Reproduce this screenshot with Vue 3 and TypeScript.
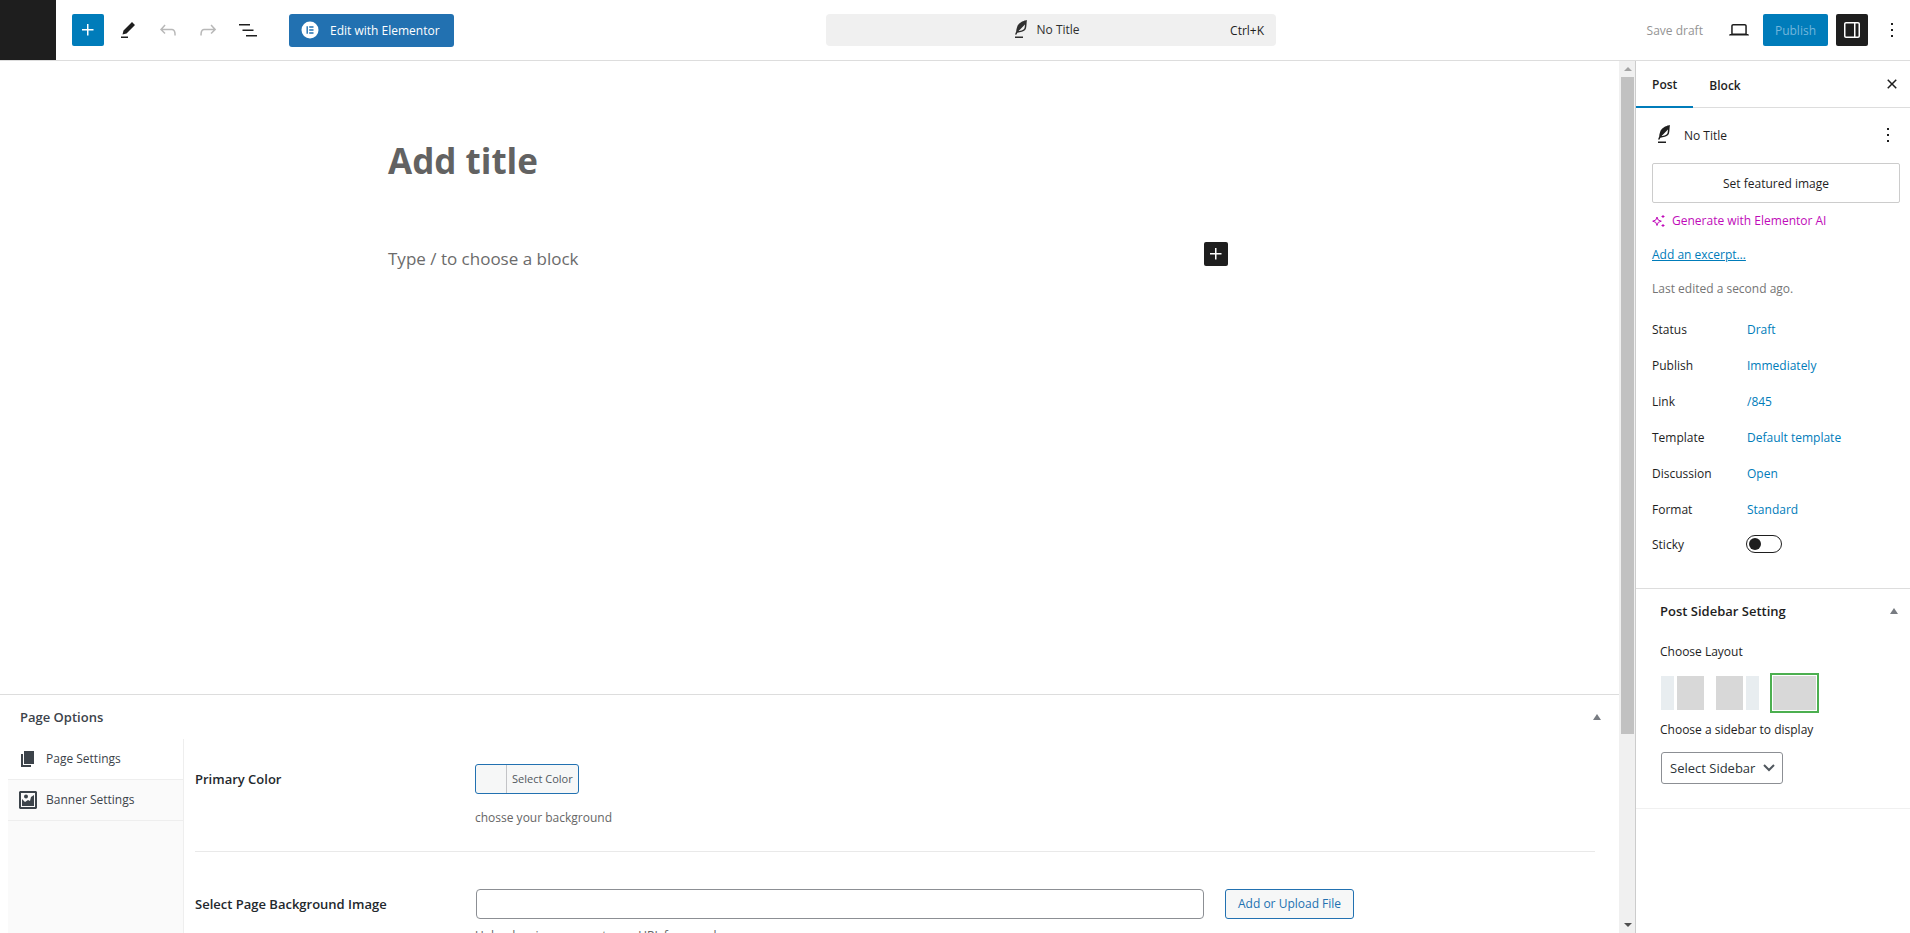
<script setup lang="ts">
import { ref } from 'vue'

interface SummaryRow {
  label: string
  value: string
}

const icons = {
  plus: 'M11 12.5V17.5H12.5V12.5H17.5V11H12.5V6H11V11H6V12.5H11Z',
  edit: 'm19 7-3-3-8.5 8.5-1 4 4-1L19 7Zm-7 11.5H5V20h7v-1.5Z',
  undo: 'M18.3 11.7c-.6-.6-1.4-.9-2.3-.9H6.7l2.9-3.3-1.1-1-4.5 5L8.5 16l1-1-2.7-2.7H16c.5 0 .9.2 1.3.5 1 1 1 3.4 1 4.5v.3h1.5v-.2c0-1.5 0-4.3-1.5-5.7z',
  redo: 'M15.6 6.5l-1.1 1 2.9 3.3H8c-.9 0-1.7.3-2.3.9-1.4 1.5-1.4 4.2-1.4 5.6v.2h1.5v-.3c0-1.1 0-3.5 1-4.5.3-.3.7-.5 1.3-.5h9.2L14.5 15l1.1 1.1 4.6-4.6-4.6-5z',
  list: 'M3 6h11v1.5H3V6Zm3.5 5.5h11V13h-11v-1.5ZM21 17H10v1.5h11V17Z',
  feather: 'M17.8 2l-.9.3c-.1 0-3.6 1-5.2 2.1C10 5.5 9.3 6.5 8.9 7.1c-.6.9-1.7 4.7-1.7 6.3l-.9 2.3c-.2.4 0 .8.4 1 .1 0 .2.1.3.1.3 0 .6-.2.7-.5l.6-1.5c.3 0 .7-.1 1.2-.2.7-.1 1.4-.3 2.2-.5.8-.2 1.6-.5 2.4-.8.7-.3 1.4-.7 1.9-1.2s.8-1.2 1-1.9c.2-.7.3-1.6.4-2.4.1-.8.1-1.7.2-2.5 0-.8.1-1.5.2-2.1V2zm-1.9 5.6c-.1.8-.2 1.5-.3 2.1-.2.6-.4 1-.6 1.3-.3.3-.8.6-1.4.9-.7.3-1.4.5-2.2.8-.6.2-1.3.3-1.8.4L15 7.5c.3-.3.6-.7 1-1.1 0 .4 0 .8-.1 1.2zM6 20h8v-1.5H6V20z',
  desktop: 'M20.5 16h-.7V8c0-1.1-.9-2-2-2H6.2c-1.1 0-2 .9-2 2v8h-.7c-.8 0-1.5.7-1.5 1.5h20c0-.8-.7-1.5-1.5-1.5zM5.7 8c0-.3.2-.5.5-.5h11.6c.3 0 .5.2.5.5v7.6H5.7V8z',
  drawer: 'M18 4H6c-1.1 0-2 .9-2 2v12c0 1.1.9 2 2 2h12c1.1 0 2-.9 2-2V6c0-1.1-.9-2-2-2zm-4 14.5H6c-.3 0-.5-.2-.5-.5V6c0-.3.2-.5.5-.5h8v13zm4.5-.5c0 .3-.2.5-.5.5h-2.5v-13H18c.3 0 .5.2.5.5v12z',
  more: 'M13 19h-2v-2h2v2zm0-6h-2v-2h2v2zm0-6h-2V5h2v2z',
  close: 'M12 13.06l3.712 3.713 1.061-1.06L13.061 12l3.712-3.712-1.06-1.06L12 10.938 8.288 7.227l-1.061 1.06L10.939 12l-3.712 3.712 1.06 1.061L12 13.061z',
}

const rows: SummaryRow[] = [
  { label: 'Status', value: 'Draft' },
  { label: 'Publish', value: 'Immediately' },
  { label: 'Link', value: '/845' },
  { label: 'Template', value: 'Default template' },
  { label: 'Discussion', value: 'Open' },
  { label: 'Format', value: 'Standard' },
]

const layouts = [
  { id: 'left', label: 'Left sidebar' },
  { id: 'right', label: 'Right sidebar' },
  { id: 'none', label: 'No sidebar' },
]

const layout = ref('none')
const sticky = ref(false)
const sidebarChoice = ref('')
const backgroundUrl = ref('')
</script>

<template>
  <div class="editor">
    <header class="header">
      <a class="site-hub" href="#" aria-label="View Posts"></a>
      <div class="tools">
        <button class="icon-btn primary" aria-label="Toggle block inserter">
          <svg class="icon" viewBox="0 0 24 24"><path :d="icons.plus" /></svg>
        </button>
        <button class="icon-btn" aria-label="Tools">
          <svg class="icon" viewBox="0 0 24 24"><path :d="icons.edit" /></svg>
        </button>
        <button class="icon-btn" disabled aria-label="Undo">
          <svg class="icon" viewBox="0 0 24 24"><path :d="icons.undo" /></svg>
        </button>
        <button class="icon-btn" disabled aria-label="Redo">
          <svg class="icon" viewBox="0 0 24 24"><path :d="icons.redo" /></svg>
        </button>
        <button class="icon-btn" aria-label="Document overview">
          <svg class="icon" viewBox="0 0 24 24"><path :d="icons.list" /></svg>
        </button>
        <button class="elementor-btn">
          <svg class="elementor-logo" viewBox="0 0 18 18">
            <circle cx="9" cy="9" r="8.5" fill="#fff" />
            <path d="M5.5 5.3h1.4v7.4H5.5zM8.2 5.3h4.3v1.4H8.2zM8.2 8.3h4.3v1.4H8.2zM8.2 11.3h4.3v1.4H8.2z" fill="#2271b1" />
          </svg>
          <span class="btn-text">Edit with Elementor</span>
        </button>
      </div>
      <div class="center">
        <button class="command-bar">
          <span class="command-title">
            <svg class="icon" viewBox="0 0 24 24"><path :d="icons.feather" /></svg>
            No Title
          </span>
          <span class="shortcut btn-text">Ctrl+K</span>
        </button>
      </div>
      <div class="settings">
        <button class="save btn-text" disabled>Save draft</button>
        <button class="icon-btn" aria-label="View">
          <svg class="icon" viewBox="0 0 24 24"><path :d="icons.desktop" /></svg>
        </button>
        <button class="publish" aria-disabled="true"><span class="btn-text">Publish</span></button>
        <button class="icon-btn pressed" aria-label="Settings">
          <svg class="icon" viewBox="0 0 24 24"><path :d="icons.drawer" /></svg>
        </button>
        <button class="icon-btn" aria-label="Options">
          <svg class="icon" viewBox="0 0 24 24"><path :d="icons.more" /></svg>
        </button>
      </div>
    </header>

    <div class="body">
      <main class="content">
        <section class="canvas">
          <div class="column">
            <h1 class="title">Add title</h1>
            <div class="prompt-row">
              <p class="prompt">Type / to choose a block</p>
              <button class="block-add" aria-label="Add block">
                <svg class="icon" viewBox="0 0 24 24"><path :d="icons.plus" /></svg>
              </button>
            </div>
          </div>
        </section>

        <section class="metabox">
          <div class="metabox-head">
            <h2>Page Options</h2>
            <button class="caret-btn" aria-label="Toggle panel: Page Options"><span class="caret"></span></button>
          </div>
          <div class="metabox-body">
            <nav class="meta-tabs">
              <a href="#" class="meta-tab active">
                <svg class="meta-icon" viewBox="0 0 20 20">
                  <path d="M6 2h10v13H6zM3 5h2v11h8v2H3z" />
                </svg>
                Page Settings
              </a>
              <a href="#" class="meta-tab">
                <svg class="meta-icon" viewBox="0 0 20 20">
                  <path fill-rule="evenodd" d="M2 1h16l1 1v16l-1 1H2l-1-1V2zm1 2v14h14V3z" />
                  <path d="M4 16V9l3 3 3-2 2 1 1-4 3-2v11z" />
                  <circle cx="8" cy="6.5" r="2" />
                </svg>
                Banner Settings
              </a>
            </nav>
            <div class="fields">
              <div class="field">
                <span class="field-label">Primary Color</span>
                <div class="field-input">
                  <button class="color-btn"><span class="swatch"></span><span class="color-text">Select Color</span></button>
                  <p class="hint">chosse your background</p>
                </div>
              </div>
              <div class="field">
                <label class="field-label" for="bg-image">Select Page Background Image</label>
                <div class="field-input">
                  <div class="upload">
                    <input id="bg-image" v-model="backgroundUrl" type="text" />
                    <button class="upload-btn">Add or Upload File</button>
                  </div>
                  <p class="hint upload-hint">Upload an image or enter an URL for page banner</p>
                </div>
              </div>
            </div>
          </div>
        </section>
      </main>

      <div class="scrollbar" aria-hidden="true">
        <span class="arrow up"></span>
        <span class="thumb"></span>
        <span class="arrow down"></span>
      </div>

      <aside class="sidebar">
        <div class="tabs" role="tablist">
          <button class="tab selected" role="tab" aria-selected="true">Post</button>
          <button class="tab" role="tab" aria-selected="false">Block</button>
          <button class="icon-btn close" aria-label="Close Settings">
            <svg class="icon" viewBox="0 0 24 24"><path :d="icons.close" /></svg>
          </button>
        </div>

        <section class="summary">
          <div class="card">
            <svg class="icon" viewBox="0 0 24 24"><path :d="icons.feather" /></svg>
            <h2>No Title</h2>
            <button class="icon-btn small" aria-label="Actions">
              <svg class="icon" viewBox="0 0 24 24"><path :d="icons.more" /></svg>
            </button>
          </div>
          <button class="featured"><span class="btn-text">Set featured image</span></button>
          <a class="ai-link" href="#">
            <svg class="ai-icon" viewBox="0 0 14 14">
              <path d="M5 3 6.2 6 9.3 7.2 6.2 8.4 5 11.5 3.8 8.4.7 7.2 3.8 6z" />
              <path d="M11 1v3M9.5 2.5h3M11 10v3M9.5 11.5h3" />
            </svg>
            Generate with Elementor AI
          </a>
          <a class="excerpt" href="#">Add an excerpt…</a>
          <p class="edited">Last edited a second ago.</p>
          <div class="rows">
            <div v-for="row in rows" :key="row.label" class="row">
              <span class="row-label">{{ row.label }}</span>
              <button class="row-value">{{ row.value }}</button>
            </div>
            <div class="row sticky-row">
              <label class="row-label" for="sticky">Sticky</label>
              <input id="sticky" v-model="sticky" class="toggle" type="checkbox" role="switch" />
            </div>
          </div>
        </section>

        <section class="side-box">
          <div class="side-head">
            <h2>Post Sidebar Setting</h2>
            <button class="caret-btn" aria-label="Toggle panel: Post Sidebar Setting"><span class="caret"></span></button>
          </div>
          <p class="side-label">Choose Layout</p>
          <div class="layouts">
            <label v-for="item in layouts" :key="item.id" class="layout" :class="{ chosen: layout === item.id }">
              <input v-model="layout" type="radio" name="layout" :value="item.id" :aria-label="item.label" />
              <span class="thumbnail" :class="item.id"><i></i><b></b></span>
            </label>
          </div>
          <label class="side-label" for="sidebar-select">Choose a sidebar to display</label>
          <div class="select-wrap">
            <select id="sidebar-select" v-model="sidebarChoice">
              <option value="">Select Sidebar</option>
            </select>
            <svg class="chevron" viewBox="0 0 12 8"><path d="M1 1l5 5 5-5" /></svg>
          </div>
        </section>
      </aside>
    </div>
  </div>
</template>

<style>
body {
  margin: 0;
  overflow: hidden;
}
</style>

<style scoped>
* {
  box-sizing: border-box;
}

.editor {
  display: flex;
  flex-direction: column;
  height: 100vh;
  background: #fff;
  color: #1e1e1e;
  font: 12px/20px "Open Sans", "Noto Sans", sans-serif;
}

button,
input,
select {
  margin: 0;
  padding: 0;
  border: 0;
  background: none;
  color: inherit;
  font: inherit;
}

h1,
h2,
p {
  margin: 0;
}

.icon {
  width: 24px;
  height: 24px;
  flex: none;
  fill: currentColor;
}

/* Top bar */
.header {
  display: flex;
  flex: none;
  height: 61px;
  border-bottom: 1px solid #ddd;
}

.header .btn-text {
  padding-top: 2px;
}

.site-hub {
  width: 56px;
  background: #1e1e1e;
}

.tools {
  display: flex;
  align-items: center;
  gap: 8px;
  padding-left: 16px;
}

.icon-btn {
  display: flex;
  align-items: center;
  justify-content: center;
  width: 32px;
  height: 32px;
  border-radius: 2px;
}

.icon-btn:disabled {
  color: #b8b8b8;
}

.primary {
  background: #007cba;
  color: #fff;
}

.pressed {
  background: #1e1e1e;
  color: #fff;
}

.elementor-btn {
  display: flex;
  align-items: center;
  gap: 11px;
  height: 33px;
  margin-left: 17px;
  padding: 0 14px 0 12px;
  border-radius: 3px;
  background: #2271b1;
  color: #fff;
}

.elementor-logo {
  width: 18px;
  height: 18px;
}

.center {
  display: flex;
  flex: 1;
  align-items: center;
  justify-content: center;
  padding-left: 14px;
}

.command-bar {
  display: grid;
  grid-template-columns: 1fr auto 1fr;
  align-items: center;
  width: 450px;
  height: 32px;
  padding: 0 12px 0 0;
  border-radius: 4px;
  background: #f0f0f0;
}

.command-title {
  display: flex;
  grid-column: 2;
  align-items: center;
  gap: 4px;
  padding-right: 2px;
  color: #2f2f2f;
}

.shortcut {
  justify-self: end;
}

.settings {
  display: flex;
  align-items: center;
  gap: 8px;
  padding-right: 2px;
}

.save {
  padding: 0 12px;
  color: #949494;
}

.publish {
  display: flex;
  align-items: center;
  height: 32px;
  padding: 0 12px;
  border-radius: 2px;
  background: #007cba;
  color: #72b6dc;
}

/* Editing area */
.body {
  display: flex;
  flex: 1;
  min-height: 0;
}

.content {
  flex: 1;
  min-width: 0;
  overflow: hidden;
}

.canvas {
  min-height: 633px;
  padding: 76px 3px 0 0;
}

.column {
  max-width: 840px;
  margin: 0 auto;
}

.title {
  color: #626262;
  font-size: 35px;
  font-weight: 700;
  line-height: 48px;
}

.prompt-row {
  display: flex;
  align-items: flex-start;
  justify-content: space-between;
  margin-top: 57px;
}

.prompt {
  color: #6b6b6b;
  font-size: 17px;
  line-height: 34px;
}

.block-add {
  display: flex;
  width: 24px;
  height: 24px;
  border-radius: 2px;
  background: #1e1e1e;
  color: #fff;
}

/* Options below the canvas */
.metabox {
  border-top: 1px solid #ddd;
}

.metabox-head {
  display: flex;
  align-items: center;
  justify-content: space-between;
  height: 44px;
  padding: 0 12px 0 20px;
  color: #3c434a;
}

.metabox-head h2 {
  font-size: 13px;
  font-weight: 600;
}

.caret-btn {
  display: flex;
  align-items: center;
  justify-content: center;
  width: 20px;
  height: 20px;
}

.caret {
  border: 4px solid transparent;
  border-top: 0;
  border-bottom: 6px solid #787c82;
}

.metabox-body {
  display: flex;
  padding: 0 24px 0 8px;
}

.meta-tabs {
  width: 176px;
  flex: none;
  border-right: 1px solid #eee;
  background: #fafafa;
}

.meta-tab {
  display: flex;
  align-items: center;
  gap: 8px;
  height: 41px;
  padding: 0 10px;
  border-bottom: 1px solid #eee;
  color: #3c434a;
  text-decoration: none;
}

.active {
  background: #fff;
}

.meta-icon {
  width: 20px;
  height: 20px;
  fill: #3c434a;
}

.fields {
  flex: 1;
  padding-left: 11px;
}

.field {
  display: flex;
  min-height: 113px;
  padding-top: 25px;
  border-bottom: 1px solid #e9e9e9;
}

.field + .field {
  padding-top: 37px;
  border-bottom: 0;
}

.field-label {
  width: 20%;
  flex: none;
  color: #23282d;
  font-size: 13px;
  font-weight: 600;
  line-height: 30px;
}

.field-input {
  flex: 1;
}

.color-btn {
  display: flex;
  height: 30px;
  overflow: hidden;
  border: 1px solid #2271b1;
  border-radius: 3px;
  background: #f6f7f7;
}

.swatch {
  width: 31px;
  height: 28px;
  border-right: 1px solid #c3c4c7;
}

.color-text {
  padding: 0 5px;
  color: #50575e;
  font-size: 11px;
  line-height: 28px;
}

.hint {
  margin-top: 14px;
  color: #666;
}

.upload {
  display: flex;
  gap: 21px;
}

.upload input {
  width: 65%;
  height: 30px;
  margin-left: 1px;
  padding: 0 8px;
  border: 1px solid #8c8f94;
  border-radius: 4px;
  background: #fff;
}

.upload-btn {
  height: 30px;
  padding: 0 12px;
  border: 1px solid #2271b1;
  border-radius: 3px;
  background: #f6f7f7;
  color: #2271b1;
}

.upload-hint {
  margin-top: 7px;
}

/* Scroll track */
.scrollbar {
  display: flex;
  flex-direction: column;
  align-items: center;
  width: 16px;
  padding: 0 1px 0 2px;
  background: #f0f0f0;
}

.thumb {
  flex: 656;
  align-self: stretch;
  background: #c1c1c1;
}

.scrollbar::after {
  content: "";
  flex: 183;
  order: 1;
}

.arrow {
  display: flex;
  align-items: center;
  justify-content: center;
  width: 13px;
  height: 16px;
}

.arrow::before {
  content: "";
  border: 4px solid transparent;
}

.up::before {
  border-top: 0;
  border-bottom-color: #a3a3a3;
}

.down {
  order: 2;
}

.down::before {
  border-bottom: 0;
  border-top-color: #505050;
}

/* Settings sidebar */
.sidebar {
  width: 275px;
  flex: none;
  border-left: 1px solid #ccc;
}

.tabs {
  display: flex;
  height: 47px;
  border-bottom: 1px solid #ddd;
}

.tab {
  height: 47px;
  padding: 2px 16px 0;
  font-weight: 600;
}

.selected {
  border-bottom: 2px solid #007cba;
}

.close {
  margin: 7px 2px 0 auto;
}

.summary {
  display: flex;
  flex-direction: column;
  align-items: flex-start;
  padding: 15px 10px 0 16px;
  border-bottom: 1px solid #ddd;
}

.card {
  display: flex;
  align-items: center;
  align-self: stretch;
  gap: 8px;
}

.card h2 {
  flex: 1;
  padding-top: 2px;
  font-size: 12px;
  font-weight: 500;
}

.small {
  width: 24px;
  height: 24px;
}

.featured {
  align-self: stretch;
  height: 40px;
  margin-top: 16px;
  padding-top: 1px;
  border: 1px solid #ccc;
  border-radius: 2px;
}

.ai-link {
  display: flex;
  align-items: center;
  gap: 6px;
  margin-top: 8px;
  color: #c00bb9;
  text-decoration: none;
}

.ai-icon {
  width: 14px;
  height: 14px;
  fill: none;
  stroke: currentColor;
}

.excerpt {
  margin-top: 14px;
  color: #007cba;
}

.edited {
  margin-top: 14px;
  color: #757575;
}

.rows {
  align-self: stretch;
  padding: 13px 0 28px;
}

.row {
  display: flex;
  align-items: center;
  height: 36px;
}

.row-label {
  width: 95px;
  padding-bottom: 1px;
}

.row-value {
  color: #007cba;
}

.sticky-row {
  height: 32px;
}

.sticky-row .row-label {
  width: 94px;
  padding: 1px 0 0;
}

.toggle {
  display: flex;
  align-items: center;
  appearance: none;
  width: 36px;
  height: 18px;
  padding: 0 2px;
  border: 1px solid #1e1e1e;
  border-radius: 9px;
}

.toggle::before {
  content: "";
  width: 12px;
  height: 12px;
  border-radius: 50%;
  background: #1e1e1e;
}

.toggle:checked {
  justify-content: flex-end;
}

.side-box {
  padding: 0 8px 24px 24px;
  border-bottom: 1px solid #f0f0f0;
}

.side-head {
  display: flex;
  align-items: center;
  justify-content: space-between;
  height: 44px;
  margin-right: -2px;
}

.side-head h2 {
  font-size: 13px;
  font-weight: 600;
}

.side-label {
  display: block;
  margin-top: 9px;
}

.layouts {
  display: flex;
  align-items: center;
  gap: 10px;
  margin-top: 11px;
}

.layout {
  display: flex;
  padding: 1px;
}

.layout input {
  position: absolute;
  opacity: 0;
}

.chosen {
  border: 2px solid #4caf50;
}

.thumbnail {
  display: flex;
  gap: 3px;
  width: 43px;
  height: 34px;
}

.thumbnail i {
  width: 13px;
  background: #e8edf0;
}

.thumbnail b {
  flex: 1;
  background: #d8d8d8;
}

.right {
  flex-direction: row-reverse;
}

.none i {
  display: none;
}

.layouts + .side-label {
  margin-top: 7px;
}

.select-wrap {
  display: inline-grid;
  align-items: center;
  margin: 12px 0 0 1px;
}

.select-wrap select {
  grid-area: 1 / 1;
  appearance: none;
  height: 32px;
  padding: 0 26px 0 8px;
  border: 1px solid #8c8f94;
  border-radius: 3px;
  color: #2c3338;
  font-size: 13px;
}

.chevron {
  grid-area: 1 / 1;
  justify-self: end;
  width: 12px;
  height: 8px;
  margin-right: 8px;
  fill: none;
  stroke: #50575e;
  stroke-width: 2px;
  pointer-events: none;
}
</style>
